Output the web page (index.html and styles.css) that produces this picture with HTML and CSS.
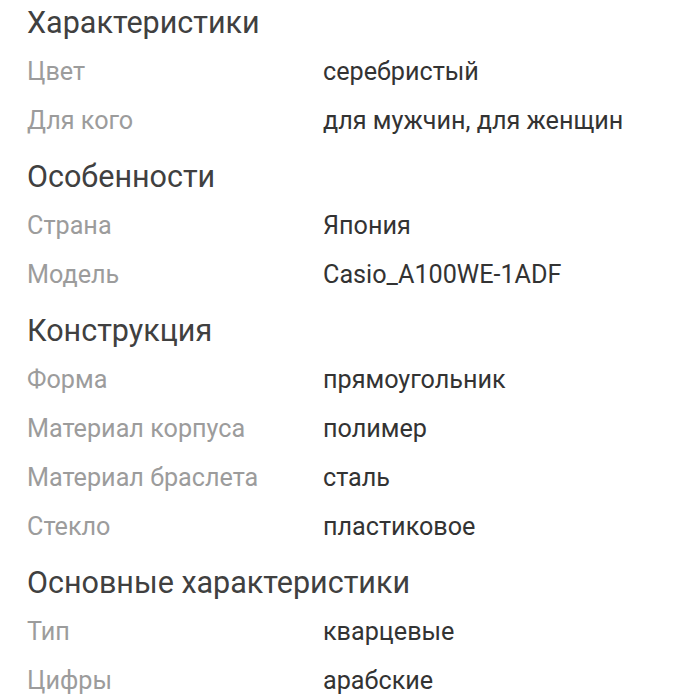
FILE: index.html
```html
<!DOCTYPE html>
<html lang="ru">
<head>
<meta charset="utf-8">
<link rel="stylesheet" href="styles.css">
</head>
<body>
<div class="specs">
  <section class="group first">
    <h2 class="title">Характеристики</h2>
    <div class="row"><span class="label">Цвет</span><span class="value">серебристый</span></div>
    <div class="row"><span class="label">Для кого</span><span class="value">для мужчин, для женщин</span></div>
  </section>
  <section class="group">
    <h2 class="title">Особенности</h2>
    <div class="row"><span class="label">Страна</span><span class="value">Япония</span></div>
    <div class="row"><span class="label">Модель</span><span class="value">Casio_A100WE-1ADF</span></div>
  </section>
  <section class="group">
    <h2 class="title">Конструкция</h2>
    <div class="row"><span class="label">Форма</span><span class="value">прямоугольник</span></div>
    <div class="row"><span class="label">Материал корпуса</span><span class="value">полимер</span></div>
    <div class="row"><span class="label">Материал браслета</span><span class="value">сталь</span></div>
    <div class="row"><span class="label">Стекло</span><span class="value">пластиковое</span></div>
  </section>
  <section class="group">
    <h2 class="title">Основные характеристики</h2>
    <div class="row"><span class="label">Тип</span><span class="value">кварцевые</span></div>
    <div class="row"><span class="label">Цифры</span><span class="value">арабские</span></div>
  </section>
</div>
</body>
</html>
```
FILE: styles.css
```css
html, body {
  margin: 0;
  padding: 0;
  background: #ffffff;
}
body {
  font-family: Roboto, "Noto Sans", sans-serif;
  overflow: hidden;
}
.specs {
  padding: 0 28px 0 27px;
  display: flex;
  flex-direction: column;
}
.group {
  margin-top: 7px;
}
.group.first {
  margin-top: -2px;
}
.title {
  margin: 0;
  font-weight: 400;
  font-size: 30.5px;
  line-height: 49px;
  color: #404040;
}
.row {
  display: grid;
  grid-template-columns: 296px 1fr;
  font-size: 25.2px;
  line-height: 49px;
}
.label {
  color: #9c9c9c;
}
.value {
  color: #333333;
}
```
